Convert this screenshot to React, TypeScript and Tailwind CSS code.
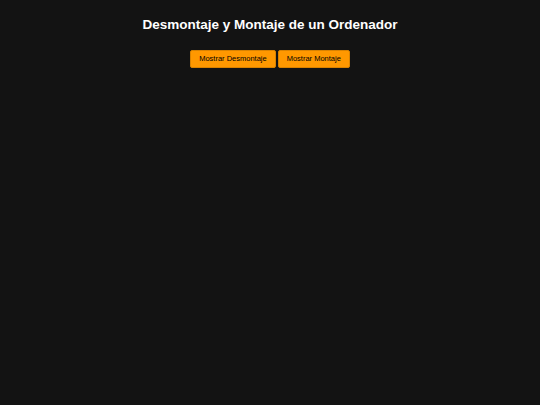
export default function App() {
  return (
    <main className="min-h-screen w-full bg-[#131313] text-center font-['Liberation_Sans',Arial,sans-serif]">
      <h1 className="pt-[17px] text-[13.5px] font-bold leading-[16px] text-white">
        Desmontaje y Montaje de un Ordenador
      </h1>
      <div className="mt-[17px] flex justify-center gap-[2px]">
        <button className="h-[18px] rounded-[2px] border border-[#d98200] bg-[#ff9800] px-[8px] text-[7.5px] leading-none text-black">
          Mostrar Desmontaje
        </button>
        <button className="h-[18px] rounded-[2px] border border-[#d98200] bg-[#ff9800] px-[8px] text-[7.5px] leading-none text-black">
          Mostrar Montaje
        </button>
      </div>
    </main>
  )
}
